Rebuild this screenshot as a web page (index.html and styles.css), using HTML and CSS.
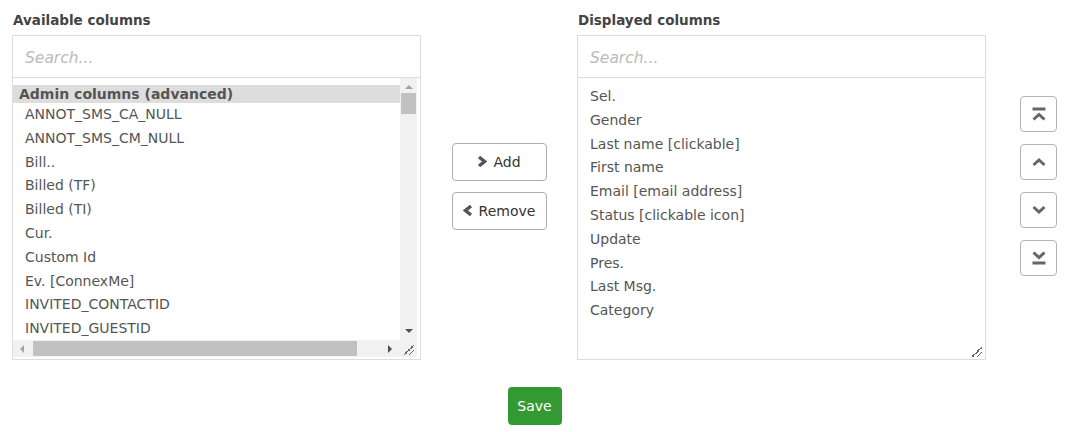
FILE: index.html
```html
<!DOCTYPE html>
<html>
<head>
<meta charset="utf-8">
<link rel="stylesheet" href="styles.css">
</head>
<body>
<div class="page">
  <div class="row">
    <div class="panel">
      <div class="label">Available columns</div>
      <div class="box">
        <div class="search">Search...</div>
        <div class="list-area">
          <div class="list-main">
            <div class="list">
              <div class="group">Admin columns (advanced)</div>
              <div class="opt">ANNOT_SMS_CA_NULL</div>
              <div class="opt">ANNOT_SMS_CM_NULL</div>
              <div class="opt">Bill..</div>
              <div class="opt">Billed (TF)</div>
              <div class="opt">Billed (TI)</div>
              <div class="opt">Cur.</div>
              <div class="opt">Custom Id</div>
              <div class="opt">Ev. [ConnexMe]</div>
              <div class="opt">INVITED_CONTACTID</div>
              <div class="opt">INVITED_GUESTID</div>
            </div>
            <div class="vscroll">
              <span class="arr-up"></span>
              <div class="vtrack"><div class="vthumb"></div></div>
              <span class="arr-down"></span>
            </div>
          </div>
          <div class="hbar">
            <div class="hscroll">
              <span class="arr-left"></span>
              <div class="htrack"><div class="hthumb"></div></div>
              <span class="arr-right"></span>
            </div>
            <div class="corner"><span class="grip"></span></div>
          </div>
        </div>
      </div>
    </div>

    <div class="mid">
      <button class="btn"><svg class="chev" width="10" height="13" viewBox="0 0 10 13"><polyline points="2,2 7.5,6.5 2,11" fill="none" stroke="#555" stroke-width="3.4"/></svg>Add</button>
      <button class="btn"><svg class="chev" width="10" height="13" viewBox="0 0 10 13"><polyline points="8,2 2.5,6.5 8,11" fill="none" stroke="#555" stroke-width="3.4"/></svg>Remove</button>
    </div>

    <div class="panel">
      <div class="label">Displayed columns</div>
      <div class="box">
        <div class="search">Search...</div>
        <div class="list-area right">
          <div class="list">
            <div class="opt">Sel.</div>
            <div class="opt">Gender</div>
            <div class="opt">Last name [clickable]</div>
            <div class="opt">First name</div>
            <div class="opt">Email [email address]</div>
            <div class="opt">Status [clickable icon]</div>
            <div class="opt">Update</div>
            <div class="opt">Pres.</div>
            <div class="opt">Last Msg.</div>
            <div class="opt">Category</div>
          </div>
          <span class="grip grip-r"></span>
        </div>
      </div>
    </div>

    <div class="order">
      <button class="sq"><svg width="16" height="16" viewBox="0 0 16 16"><rect x="1.5" y="1.5" width="13" height="3" fill="#666"/><polyline points="2.5,13.5 8,8.5 13.5,13.5" fill="none" stroke="#666" stroke-width="3"/></svg></button>
      <button class="sq"><svg width="16" height="16" viewBox="0 0 16 16"><polyline points="2.5,11 8,6 13.5,11" fill="none" stroke="#666" stroke-width="3"/></svg></button>
      <button class="sq"><svg width="16" height="16" viewBox="0 0 16 16"><polyline points="2.5,5 8,10 13.5,5" fill="none" stroke="#666" stroke-width="3"/></svg></button>
      <button class="sq"><svg width="16" height="16" viewBox="0 0 16 16"><polyline points="2.5,2.5 8,7.5 13.5,2.5" fill="none" stroke="#666" stroke-width="3"/><rect x="1.5" y="11.5" width="13" height="3" fill="#666"/></svg></button>
    </div>
  </div>
  <div class="actions">
    <button class="save">Save</button>
  </div>
</div>
</body>
</html>
```

FILE: styles.css
```css
* { box-sizing: border-box; }
html, body { margin: 0; padding: 0; background: #fff; }
body {
  font-family: Tahoma, "DejaVu Sans", Verdana, sans-serif;
  font-size: 14px;
  color: #555;
}
.page { padding: 10px 10px 0 12px; width: 1067px; }
.row { display: flex; align-items: center; }
.panel { width: 409px; flex: none; }
.label {
  font-weight: bold;
  color: #444;
  font-size: 13.5px;
  line-height: 20px;
  height: 25px;
  padding-left: 1px;
}
.box {
  border: 1px solid #ddd;
  height: 325px;
  display: flex;
  flex-direction: column;
}
.search {
  height: 42px;
  flex: none;
  border-bottom: 1px solid #ddd;
  padding: 0 12px;
  line-height: 44px;
  font-size: 15.5px;
  font-style: italic;
  color: #bbb;
}
.list-area { flex: 1; display: flex; flex-direction: column; min-height: 0; }
.list-main { flex: 1; display: flex; min-height: 0; }
.list { flex: 1; padding-top: 7px; overflow: hidden; white-space: nowrap; }
.group {
  background: #ddd;
  font-weight: bold;
  color: #555;
  height: 18px;
  line-height: 18px;
  padding-left: 6px;
}
.opt { height: 23.8px; line-height: 23.8px; padding-left: 12px; }
.list-area.right { position: relative; }

.vscroll {
  width: 17px;
  margin-right: 3px;
  background: #f1f1f1;
  display: flex;
  flex-direction: column;
  align-items: center;
}
.vtrack { flex: 1; width: 100%; padding: 0 1px; }
.vthumb { height: 21px; background: #c1c1c1; }
.arr-up, .arr-down, .arr-left, .arr-right { display: block; width: 0; height: 0; flex: none; }
.arr-up { border: 4px solid transparent; border-top: 0; border-bottom: 4px solid #a3a3a3; margin: 7px 0 4px; }
.arr-down { border: 4px solid transparent; border-bottom: 0; border-top: 4px solid #505050; margin: 4px 0 7px; }
.hbar { height: 17px; display: flex; flex: none; margin-bottom: 2px; }
.hscroll { flex: 1; background: #f1f1f1; display: flex; align-items: center; }
.htrack { flex: 1; height: 100%; padding: 1px 0; }
.hthumb { width: 324px; height: 100%; background: #c1c1c1; }
.arr-left { border: 4px solid transparent; border-left: 0; border-right: 4px solid #a3a3a3; margin: 0 9px 0 7px; }
.arr-right { border: 4px solid transparent; border-right: 0; border-left: 4px solid #505050; margin: 0 8px 0 24px; }
.corner { width: 17px; margin-right: 3px; background: #f1f1f1; position: relative; }
.grip {
  position: absolute;
  right: 3px;
  bottom: 2px;
  width: 10px;
  height: 10px;
  background:
    linear-gradient(135deg, transparent 0 45%, #666 45% 55%, transparent 55%) 0 0 / 10px 10px no-repeat,
    linear-gradient(135deg, transparent 0 45%, #666 45% 55%, transparent 55%) 5px 5px / 5px 5px no-repeat;
}
.grip-r { right: 3px; bottom: 2px; }

.mid {
  width: 156px;
  flex: none;
  display: flex;
  flex-direction: column;
  align-items: center;
  gap: 11px;
  padding-top: 2px;
}
.btn {
  width: 95px;
  height: 38px;
  border: 1px solid #adadad;
  border-radius: 4px;
  background: #fff;
  font-family: inherit;
  font-size: 14px;
  color: #333;
  display: flex;
  align-items: center;
  justify-content: center;
  gap: 6px;
  padding: 0;
}
.chev { flex: none; }
.order {
  margin-left: 34px;
  display: flex;
  flex-direction: column;
  gap: 12px;
  padding-top: 2px;
}
.sq {
  width: 37px;
  height: 36px;
  border: 1px solid #b3b3b3;
  border-radius: 4px;
  background: #fff;
  display: flex;
  align-items: center;
  justify-content: center;
  padding: 0;
}
.actions { display: flex; justify-content: center; padding-top: 27px; }
.save {
  width: 54px;
  height: 38px;
  border: 0;
  border-radius: 4px;
  background: #339933;
  color: #fff;
  font-family: inherit;
  font-size: 14px;
  padding: 0;
}
```
